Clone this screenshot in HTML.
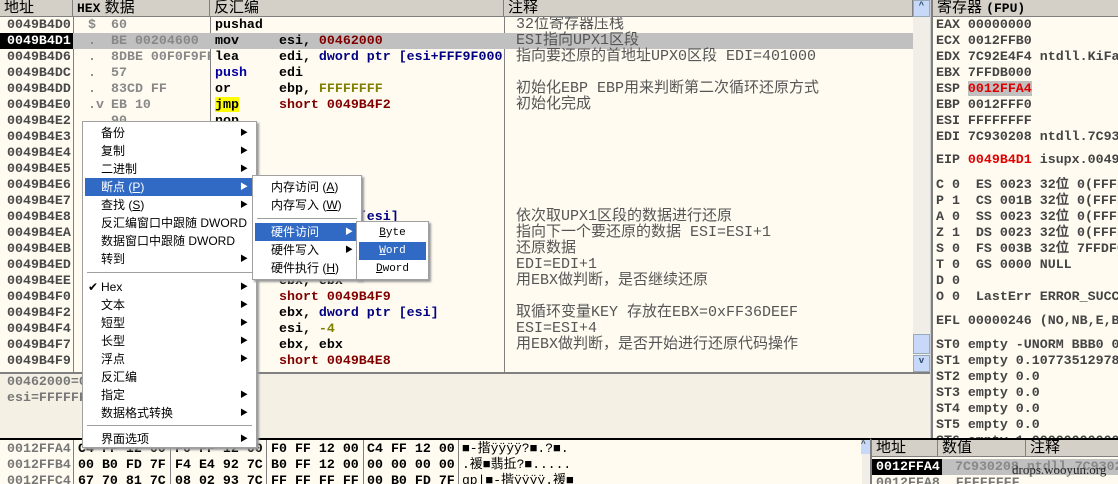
<!DOCTYPE html>
<html><head><meta charset="utf-8"><style>
*{margin:0;padding:0;box-sizing:border-box}
html,body{width:1118px;height:484px;overflow:hidden}
body{background:#fffbf0;position:relative;font-family:"Liberation Mono",monospace;font-weight:bold;font-size:13.3px;color:#484848}
.a{position:absolute;white-space:pre;line-height:16px;overflow:hidden}
.h{position:absolute;background:#d4d0c8;top:0;height:17px;border-bottom:1px solid #808080;font-family:"Liberation Sans","Noto Sans CJK SC",sans-serif;font-weight:normal;font-size:15px;line-height:16px;color:#000;padding-left:4px;border-right:1px solid #808080;overflow:hidden;white-space:nowrap}
.cj{font-family:"Liberation Mono","Noto Sans CJK SC",monospace;font-weight:normal;font-size:15px;color:#555}
.vl{position:absolute;width:1px;background:#808080}
.menu{position:absolute;background:#fff;border:1px solid #a0a0a0;box-shadow:2px 2px 2px #999;font-family:"Liberation Sans","Noto Sans CJK SC",sans-serif;font-weight:normal;font-size:12px;color:#000}
.mi{position:absolute;left:2px;right:2px;height:18px;line-height:18px;padding-left:16px;white-space:pre}
.mi.s{background:#316ac5;color:#fff}
.ar{position:absolute;right:6px;top:0;font-size:8px}
.sep{position:absolute;left:4px;right:4px;height:1px;background:#a0a0a0}
.r{color:#800000}.n{color:#000080}.y{color:#808000}.k{color:#000}
</style></head><body>
<div class="h" style="left:0;width:73px">地址</div>
<div class="h" style="left:73px;width:137px"><span style="font-family:'Liberation Mono';font-weight:bold;font-size:13px">HEX</span> 数据</div>
<div class="h" style="left:210px;width:294px">反汇编</div>
<div class="h" style="left:504px;width:409px">注释</div>
<div style="position:absolute;left:913px;top:0;width:17px;height:372px;background:#f0eee6"></div>
<div style="position:absolute;left:913px;top:0;width:17px;height:17px;background:#c8d8f8;border:1px solid #9ab;font-size:9px;text-align:center;color:#246">^</div>
<div style="position:absolute;left:913px;top:334px;width:17px;height:20px;background:#c8d8f8;border:1px solid #9ab"></div>
<div style="position:absolute;left:913px;top:355px;width:17px;height:17px;background:#c8d8f8;border:1px solid #9ab;font-size:9px;text-align:center;color:#246">v</div>
<div class="vl" style="left:73px;top:17px;height:355px"></div>
<div class="vl" style="left:210px;top:17px;height:355px"></div>
<div class="vl" style="left:504px;top:17px;height:355px"></div>
<div style="position:absolute;left:73px;top:33px;width:840px;height:16px;background:#c0c0c0"></div>
<div style="position:absolute;left:0;top:33px;width:73px;height:16px;background:#000"></div>
<div class="a" style="left:7px;top:17px">0049B4D0
<span style="color:#fff">0049B4D1</span>
0049B4D6
0049B4DC
0049B4DD
0049B4E0
0049B4E2
0049B4E3
0049B4E4
0049B4E5
0049B4E6
0049B4E7
0049B4E8
0049B4EA
0049B4EB
0049B4ED
0049B4EE
0049B4F0
0049B4F2
0049B4F4
0049B4F7
0049B4F9</div>
<div class="a" style="left:88px;top:17px;color:#888">$
.
.
.
.
.v
</div>
<div class="a" style="left:111px;top:17px;width:99px;color:#888">60
BE 00204600
8DBE 00F0F9FF
57
83CD FF
EB 10
90</div>
<div class="a k" style="left:215px;top:17px">pushad
mov
lea
<span style="color:#0000a0">push</span>
or
<span style="background:#ff0">jmp</span>
nop</div>
<div class="a k" style="left:279px;top:33px;width:225px">esi, <span class="r">00462000</span>
edi, <span class="n">dword ptr [esi+FFF9F000</span>
edi
ebp, <span class="y">FFFFFFFF</span>
<span class="r">short 0049B4F2</span></div>
<div class="a k" style="left:279px;top:209px"><span class="n">dword ptr [esi]</span>



ebx, ebx
<span class="r">short 0049B4F9</span>
ebx, <span class="n">dword ptr [esi]</span>
esi, <span class="y">-4</span>
ebx, ebx
<span class="r">short 0049B4E8</span></div>
<div class="a cj" style="left:516px;top:17px">32位寄存器压栈
ESI指向UPX1区段
指向要还原的首地址UPX0区段 EDI=401000

初始化EBP EBP用来判断第二次循环还原方式
初始化完成






依次取UPX1区段的数据进行还原
指向下一个要还原的数据 ESI=ESI+1
还原数据
EDI=EDI+1
用EBX做判断，是否继续还原

取循环变量KEY 存放在EBX=0xFF36DEEF
ESI=ESI+4
用EBX做判断，是否开始进行还原代码操作</div>
<div style="position:absolute;left:0;top:372px;width:930px;height:66px;background:#f4f1e4;border-top:2px solid #808080"></div>
<div class="a" style="left:7px;top:374px;color:#777">00462000=00462000
esi=FFFFFFFF</div>
<div style="position:absolute;left:930px;top:0;width:3px;height:440px;background:#808080;border-left:1px solid #ccc"></div>
<div class="h" style="left:933px;width:185px;border-right:0">寄存器 <span style="font-family:'Liberation Mono';font-weight:bold;font-size:13px">(FPU)</span></div>
<div class="a" style="left:936px;top:17px;width:182px;color:#444">EAX 00000000
ECX 0012FFB0
EDX 7C92E4F4 ntdll.KiFast
EBX 7FFDB000
ESP <span style="background:#c0c0c0;color:#e00000">0012FFA4</span>
EBP 0012FFF0
ESI FFFFFFFF
EDI 7C930208 ntdll.7C9302</div>
<div class="a" style="left:936px;top:152px;width:182px;color:#444">EIP <span style="color:#e00000">0049B4D1</span> isupx.0049B4</div>
<div class="a" style="left:936px;top:177px;width:182px;color:#444">C 0  ES 0023 32位 0(FFFF
P 1  CS 001B 32位 0(FFFF
A 0  SS 0023 32位 0(FFFF
Z 1  DS 0023 32位 0(FFFF
S 0  FS 003B 32位 7FFDF0
T 0  GS 0000 NULL
D 0
O 0  LastErr ERROR_SUCCE</div>
<div class="a" style="left:936px;top:313px;width:182px;color:#444">EFL 00000246 (NO,NB,E,BE</div>
<div class="a" style="left:936px;top:337px;width:182px;height:103px;color:#444">ST0 empty -UNORM BBB0 01
ST1 empty 0.107735129780
ST2 empty 0.0
ST3 empty 0.0
ST4 empty 0.0
ST5 empty 0.0
ST6 empty 1.000000000000</div>
<div style="position:absolute;left:0;top:438px;width:870px;height:46px;background:#fffbf0;border-top:2px solid #000"></div>
<div class="vl" style="left:73px;top:440px;height:44px"></div>
<div class="vl" style="left:170px;top:440px;height:44px"></div>
<div class="vl" style="left:266px;top:440px;height:44px"></div>
<div class="vl" style="left:363px;top:440px;height:44px"></div>
<div class="vl" style="left:458px;top:440px;height:44px"></div>
<div class="a" style="left:7px;top:441px;color:#777">0012FFA4
0012FFB4
0012FFC4</div>
<div class="a k" style="left:78px;top:441px">C4 FF 12 00
00 B0 FD 7F
67 70 81 7C</div>
<div class="a k" style="left:175px;top:441px">F0 FF 12 00
F4 E4 92 7C
08 02 93 7C</div>
<div class="a k" style="left:271px;top:441px">F0 FF 12 00
B0 FF 12 00
FF FF FF FF</div>
<div class="a k" style="left:367px;top:441px">C4 FF 12 00
00 00 00 00
00 B0 FD 7F</div>
<div class="a k" style="left:462px;top:441px;width:180px;font-family:'Liberation Mono','Noto Sans CJK SC',monospace;font-weight:normal;font-size:13px;color:#000">■-揩ÿÿÿÿ?■.?■.
.褑■翡拞?■.....
gp|■-揩ÿÿÿÿ.褑■</div>
<div style="position:absolute;left:862px;top:440px;width:10px;height:44px;background:#f0eee6"></div>
<div style="position:absolute;left:861px;top:440px;width:10px;height:14px;background:#c8d8f8;font-size:8px">^</div>
<div style="position:absolute;left:870px;top:438px;width:248px;height:46px;background:#fffbf0;border-top:2px solid #000;border-left:2px solid #808080"></div>
<div class="h" style="left:872px;top:440px;width:66px">地址</div>
<div class="h" style="left:938px;top:440px;width:88px">数值</div>
<div class="h" style="left:1026px;top:440px;width:92px;border-right:0">注释</div>
<div style="position:absolute;left:872px;top:459px;width:70px;height:16px;background:#000"></div>
<div style="position:absolute;left:942px;top:459px;width:176px;height:16px;background:#c0c0c0"></div>
<div class="a" style="left:876px;top:459px;color:#fff">0012FFA4</div>
<div class="a" style="left:955px;top:459px;width:163px;color:#888">7C930208 ntdll.7C9302</div>
<div class="a" style="left:876px;top:475px;color:#777">0012FFA8  FFFFFFFF</div>
<div class="a" style="left:1012px;top:462px;font-family:'Liberation Serif',serif;font-weight:normal;font-size:13px;color:#222">drops.wooyun.org</div>
<div class="menu" style="left:82px;top:121px;width:175px;height:327px">
<div class="mi" style="top:2px">备份<span class="ar">▶</span></div>
<div class="mi" style="top:20px">复制<span class="ar">▶</span></div>
<div class="mi" style="top:38px">二进制<span class="ar">▶</span></div>
<div class="mi s" style="top:56px">断点 (<u>P</u>)<span class="ar">▶</span></div>
<div class="mi" style="top:74px">查找 (<u>S</u>)<span class="ar">▶</span></div>
<div class="mi" style="top:92px">反汇编窗口中跟随 DWORD</div>
<div class="mi" style="top:110px">数据窗口中跟随 DWORD</div>
<div class="mi" style="top:128px">转到<span class="ar">▶</span></div>
<div class="sep" style="top:150px"></div>
<div class="mi" style="top:156px"><span style="position:absolute;left:3px">✔</span>Hex<span class="ar">▶</span></div>
<div class="mi" style="top:174px">文本<span class="ar">▶</span></div>
<div class="mi" style="top:192px">短型<span class="ar">▶</span></div>
<div class="mi" style="top:210px">长型<span class="ar">▶</span></div>
<div class="mi" style="top:228px">浮点<span class="ar">▶</span></div>
<div class="mi" style="top:246px">反汇编</div>
<div class="mi" style="top:264px">指定<span class="ar">▶</span></div>
<div class="mi" style="top:282px">数据格式转换<span class="ar">▶</span></div>
<div class="sep" style="top:303px"></div>
<div class="mi" style="top:308px">界面选项<span class="ar">▶</span></div>
</div>
<div class="menu" style="left:252px;top:175px;width:110px;height:105px">
<div class="mi" style="top:2px">内存访问 (<u>A</u>)</div>
<div class="mi" style="top:20px">内存写入 (<u>W</u>)</div>
<div class="sep" style="top:42px"></div>
<div class="mi s" style="top:47px">硬件访问<span class="ar">▶</span></div>
<div class="mi" style="top:65px">硬件写入<span class="ar">▶</span></div>
<div class="mi" style="top:83px">硬件执行 (<u>H</u>)</div>
</div>
<div class="menu" style="left:356px;top:221px;width:73px;height:59px">
<div class="mi" style="top:2px;font-family:'Liberation Mono';font-size:11px;text-align:center;padding:0"><u>B</u>yte</div>
<div class="mi s" style="top:20px;font-family:'Liberation Mono';font-size:11px;text-align:center;padding:0"><u>W</u>ord</div>
<div class="mi" style="top:38px;font-family:'Liberation Mono';font-size:11px;text-align:center;padding:0"><u>D</u>word</div>
</div>
</body></html>
